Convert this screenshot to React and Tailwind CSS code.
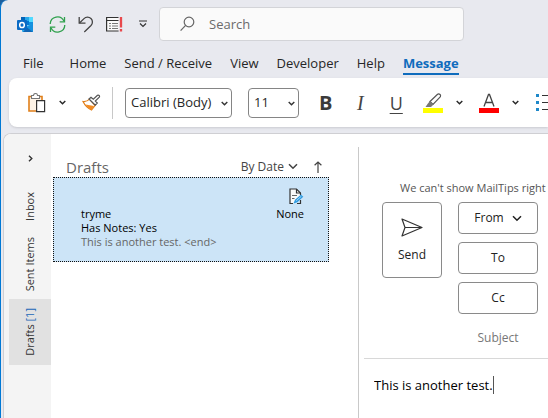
import React from "react";

const tabs = ["File", "Home", "Send / Receive", "View", "Developer", "Help", "Message"];

function Chevron({ className = "" }) {
  return (
    <svg className={className} width="7" height="5" viewBox="0 0 7 5" fill="none" stroke="currentColor" strokeWidth="1.4" aria-hidden="true">
      <path d="M0.7 1 3.5 3.8 6.3 1" />
    </svg>
  );
}

function WideChevron() {
  return (
    <svg width="10" height="7" viewBox="0 0 10 7" fill="none" stroke="currentColor" strokeWidth="1.5" aria-hidden="true">
      <path d="M1 1.2 5 5.3 9 1.2" />
    </svg>
  );
}

function OutlookLogo() {
  return (
    <svg width="17" height="17" viewBox="0 0 17 17" aria-hidden="true">
      <path d="M4 1h12v8H4z" fill="#1490df" />
      <path d="M4 1h4v4H4z" fill="#0364b8" />
      <path d="M8 1h4v4H8z" fill="#28a8ea" />
      <path d="M12 1h4v5h-4z" fill="#50d9ff" />
      <path d="M8 5h4v4H8z" fill="#0078d4" />
      <path d="M5 15.5V11l11-3v8H6z" fill="#28a8ea" />
      <path d="M16 7.5 8 12l8 4z" fill="#1490df" />
      <path d="M6 16h10L10 11.5z" fill="#1066b5" />
      <rect x="0" y="4" width="10" height="10" rx="1" fill="#0a6ac4" />
      <ellipse cx="5" cy="9" rx="2.3" ry="2.6" fill="none" stroke="#fff" strokeWidth="1.5" />
    </svg>
  );
}

function SyncIcon() {
  return (
    <svg width="17" height="17" viewBox="0 0 17 17" fill="none" stroke="#30a14e" strokeWidth="1.3" aria-hidden="true">
      <path d="M1.2 8A7.2 7.2 0 0 1 15 5.3M15.8 9A7.2 7.2 0 0 1 2 11.7" />
      <path d="M15.5 1v4.8h-4.8M1.5 16v-4.8h4.8" />
    </svg>
  );
}

function UndoIcon() {
  return (
    <svg width="16" height="17" viewBox="0 0 16 17" fill="none" stroke="#444" strokeWidth="1.3" aria-hidden="true">
      <path d="M1.2 1v6.2h6.3" />
      <path d="M1.5 7 6 2.6A4.9 4.9 0 0 1 13 9.5L6.3 16" />
    </svg>
  );
}

function FormIcon() {
  return (
    <svg width="17" height="17" viewBox="0 0 17 17" fill="none" aria-hidden="true">
      <path d="M12.5 1.5H.6v13.500h12" stroke="#333" strokeWidth="1.2" fill="#fafafa" />
      <path d="M1 4.500h11.500" stroke="#333" />
      <path d="M3 7.500h2M6 7.500h6M3 10h2M6 10h6M3 12.500h2M6 12.500h6" stroke="#777" />
      <path d="M15 1v10.500M15 13v2.500" stroke="#e8484c" strokeWidth="2.3" />
    </svg>
  );
}

function PasteIcon() {
  return (
    <svg width="18" height="20" viewBox="0 0 18 20" fill="none" aria-hidden="true">
      <path d="M1 3.500h13v14.500H1z" fill="#fdf3e7" stroke="#e07f1a" strokeWidth="1.6" />
      <path d="M3.500 5.500v-3h2a2 2 0 0 1 4 0h2v3z" fill="#fff" stroke="#777" strokeWidth="1.1" />
      <path d="M8.600 7.600h8v11h-8z" fill="#fff" stroke="#333" strokeWidth="1.2" />
    </svg>
  );
}

function PainterIcon() {
  return (
    <svg width="19" height="17" viewBox="0 0 19 17" fill="none" aria-hidden="true">
      <path d="M1 7.500c3 .3 5-.5 6.500-2.500l5.500 6.500L9.500 16C6 14.500 3 11.500 1 7.500z" fill="#fff" stroke="#e07f1a" strokeWidth="1.2" />
      <path d="M3.500 10.500l8.500 1.500-2.500 4C7 15 5 13 3.500 10.500z" fill="#f28b22" />
      <path d="M7 5 9 3.200l2.300 2L15.500 1.300a1.300 1.300 0 0 1 1.800 1.800L13.300 7l2 2-2 2.200z" fill="#fff" stroke="#555" strokeWidth="1.2" />
    </svg>
  );
}

function HighlightIcon() {
  return (
    <svg width="20" height="20" viewBox="0 0 20 20" fill="none" aria-hidden="true">
      <path d="M7 8.500 14.300 1.500a1.900 1.900 0 0 1 2.700 2.700L10 11.500z" stroke="#555" strokeWidth="1.2" />
      <path d="M7 8 4.500 11 2.500 14H8l2.500-2.500z" fill="#777" />
      <path d="M0 15h20v5H0z" fill="#ff0" />
    </svg>
  );
}

function FontColorIcon() {
  return (
    <svg width="20" height="20" viewBox="0 0 20 20" fill="none" aria-hidden="true">
      <path d="M5 13.500 9.500 1.500h1L15 13.500M6.500 9.500h7" stroke="#444" strokeWidth="1.3" />
      <path d="M0 15h20v5H0z" fill="red" />
    </svg>
  );
}

function BulletsIcon() {
  return (
    <svg width="20" height="18" viewBox="0 0 20 18" aria-hidden="true">
      <path d="M0 0h3v3H0zM0 7h3v3H0zM0 14h3v3H0z" fill="#1e88c9" />
      <path d="M6 1h14v1H6zM6 8h14v1H6zM6 15h14v1H6z" fill="#333" />
    </svg>
  );
}

function DraftIcon() {
  return (
    <svg width="15" height="17" viewBox="0 0 15 17" fill="none" aria-hidden="true">
      <path d="M4 15.500H1V1h6.500L11.500 5v2" fill="#fafafa" stroke="#333" strokeWidth="1.2" />
      <path d="M7.500 1v4h4M11.500 12v3.500H8" stroke="#333" strokeWidth="1.2" />
      <path d="M3 7.500h5M3 10.500h2.500" stroke="#666" />
      <path d="M4.500 15.500 6 11.700l6-5.200 2.300 2.200-6 5.600z" fill="#2f9be0" />
      <path d="M7.300 12.700l5-4.400" stroke="#a9d8f8" />
    </svg>
  );
}

function SendIcon() {
  return (
    <svg width="22" height="19" viewBox="0 0 22 19" fill="none" stroke="#333" strokeWidth="1.2" strokeLinejoin="round" aria-hidden="true">
      <path d="M1 1 21 9.500 1 18 4 9.500zM4 9.500h17" />
    </svg>
  );
}

function RibbonSelect({ label, value, className }) {
  return (
    <div className={"relative shrink-0 " + className}>
      <select aria-label={label} defaultValue={value} className="h-[30px] w-full appearance-none rounded border border-[#858585] bg-white pl-[5px] text-[13px] text-[#262626]">
        <option>{value}</option>
      </select>
      <Chevron className="pointer-events-none absolute right-1 top-[13px] text-[#333]" />
    </div>
  );
}

const fieldButton = "flex h-8 w-20 items-center justify-center gap-2 rounded border border-[#8a8a8a] bg-white text-xs text-[#222]";

export default function App() {
  return (
    <div className="h-screen overflow-hidden bg-[#1c5f9e] font-['Open_Sans','Noto_Sans',sans-serif]">
      <div className="flex h-full flex-col overflow-hidden rounded-tl-lg border-l border-[#0078d4] bg-[#e8e9ef] text-[#262626]">
        <header className="flex h-12 shrink-0 items-center pl-4">
          <OutlookLogo />
          <div className="ml-[15px] flex items-center gap-3">
            <button aria-label="Send/Receive all folders"><SyncIcon /></button>
            <button aria-label="Undo"><UndoIcon /></button>
            <button aria-label="Form"><FormIcon /></button>
          </div>
          <button aria-label="Customize toolbar" className="ml-4">
            <svg width="8" height="8" viewBox="0 0 8 8" fill="none" stroke="#333" strokeWidth="1.2" aria-hidden="true">
              <path d="M0 1h8M1 3.500 4 6.500 7 3.500" />
            </svg>
          </button>
          <label className="ml-3 flex h-[34px] w-[305px] items-center rounded border border-[#d3d4d8] bg-[#fafafa] pl-5">
            <svg width="15" height="16" viewBox="0 0 15 16" fill="none" stroke="#666" strokeWidth="1.2" aria-hidden="true">
              <circle cx="9" cy="6" r="4.8" />
              <path d="M5.600 9.400.6 14.700" />
            </svg>
            <input type="search" aria-label="Search" placeholder="Search" className="ml-3.5 min-w-0 flex-1 bg-transparent pt-0.5 text-[13px] outline-none placeholder:text-[#6b6b6b]" />
          </label>
        </header>

        <nav className="flex h-[30px] shrink-0 gap-[18px] pl-[22px] pt-[5px] text-[13px] leading-5">
          {tabs.map((tab) => (
            <a
              key={tab}
              href="#"
              className={
                tab === "Message"
                  ? "h-[22px] shrink-0 border-b-2 border-[#0f6cbd] font-bold text-[#0f6cbd]"
                  : "h-[22px] shrink-0 whitespace-nowrap first:mr-2"
              }
            >
              {tab}
            </a>
          ))}
        </nav>

        <div className="ml-2 flex h-[49px] shrink-0 items-center overflow-hidden rounded-l-lg bg-white pl-[19px] shadow-sm">
          <button aria-label="Paste"><PasteIcon /></button>
          <button aria-label="Paste options" className="ml-[13px]"><Chevron /></button>
          <button aria-label="Format painter" className="ml-4"><PainterIcon /></button>
          <div className="ml-[11px] h-8 w-px shrink-0 bg-[#c8c8c8]" />
          <RibbonSelect label="Font" value="Calibri (Body)" className="ml-3 w-[107px]" />
          <RibbonSelect label="Font size" value="11" className="ml-4 w-[51px]" />
          <button className="ml-5 w-3 text-xl font-bold leading-6 text-[#3b3b3b]">B</button>
          <button className="ml-[26px] w-3 font-['Liberation_Serif',serif] text-xl italic leading-6 text-[#444]">I</button>
          <button className="ml-[26px] w-3 text-lg leading-6 text-[#444] underline underline-offset-3">U</button>
          <button aria-label="Highlight color" className="ml-[21px]"><HighlightIcon /></button>
          <button aria-label="Highlight options" className="ml-[13px]"><Chevron /></button>
          <button aria-label="Font color" className="ml-4"><FontColorIcon /></button>
          <button aria-label="Font color options" className="ml-[13px]"><Chevron /></button>
          <button aria-label="Bullets" className="ml-[17px] shrink-0"><BulletsIcon /></button>
        </div>

        <div className="ml-0.5 mt-1.5 flex min-h-0 flex-1 overflow-hidden rounded-tl-lg border-l border-t border-[#cfcfd3] bg-white">
          <aside className="flex w-[47px] shrink-0 flex-col bg-[#f4f4f4] pl-[5px] text-[11px] text-[#333]">
            <button aria-label="Expand folder pane" className="flex h-12 items-center justify-center">
              <Chevron className="-rotate-90" />
            </button>
            <button className="flex h-12 items-center justify-center"><span className="rotate-180 [writing-mode:vertical-rl]">Inbox</span></button>
            <button className="flex h-[69px] items-center justify-center"><span className="rotate-180 whitespace-nowrap [writing-mode:vertical-rl]">Sent Items</span></button>
            <button className="flex h-[66px] items-center justify-center bg-[#e1e1e1]">
              <span className="rotate-180 whitespace-nowrap [writing-mode:vertical-rl]">Drafts <span className="text-[#1a66b8]">[1]</span></span>
            </button>
          </aside>

          <section className="w-[307px] shrink-0 pl-0.5 pt-[22px]">
            <div className="flex h-[21px] items-center pl-[13px] text-[#666]">
              <h1 className="text-[15px] leading-5">Drafts</h1>
              <button className="ml-auto flex items-center gap-1 text-xs text-[#444]">By Date <WideChevron /></button>
              <button aria-label="Sort order" className="ml-4 mr-9">
                <svg width="8" height="12" viewBox="0 0 8 12" fill="none" stroke="#444" strokeWidth="1.2" aria-hidden="true">
                  <path d="M4 12V1M.6 4.300 4 1l3.400 3.300" />
                </svg>
              </button>
            </div>
            <article className="mr-[29px] flex h-[85px] justify-between border border-dotted border-[#111] bg-[#cce4f7] pl-[27px] pr-6 text-[11px] leading-[14px]">
              <div className="flex flex-col pt-[29px]">
                <span className="font-medium text-black">tryme</span>
                <span className="font-medium text-black">Has Notes: Yes</span>
                <span className="text-[#666]">This is another test. &lt;end&gt;</span>
              </div>
              <div className="flex flex-col items-end pt-2.5">
                <DraftIcon />
                <span className="mt-0.5 font-medium text-black">None</span>
              </div>
            </article>
          </section>

          <main className="mt-[13px] flex min-w-0 flex-1 flex-col overflow-hidden border-l border-[#c9c9c9]">
            <p className="ml-[41px] mt-[33px] whitespace-nowrap text-[11px] leading-4 text-[#555]">We can't show MailTips right</p>
            <div className="ml-[23px] mt-1.5 flex gap-4">
              <button className="flex h-[76px] w-[60px] shrink-0 flex-col items-center justify-center gap-2.5 rounded border border-[#8a8a8a] bg-white text-xs leading-4 text-[#222]">
                <SendIcon />
                Send
              </button>
              <div className="flex shrink-0 flex-col gap-2">
                <button className={fieldButton}>From <WideChevron /></button>
                <button className={fieldButton}>To</button>
                <button className={fieldButton}>Cc</button>
                <label htmlFor="subject" className="h-8 text-center text-xs leading-8 text-[#777]">Subject</label>
              </div>
              <div className="flex min-w-0 flex-1 items-end">
                <input id="subject" className="h-8 w-full min-w-0 text-xs outline-none" />
              </div>
            </div>
            <div className="ml-[5px] mt-1 h-px shrink-0 bg-[#d8d8d8]" />
            <div className="ml-[15px] mt-[17px] flex items-center">
              <input aria-label="Message body" defaultValue="This is another test." className="text-[13px] leading-[18px] text-black outline-none [field-sizing:content]" />
              <span className="h-[18px] w-px bg-[#555]" />
            </div>
          </main>
        </div>
      </div>
    </div>
  );
}
